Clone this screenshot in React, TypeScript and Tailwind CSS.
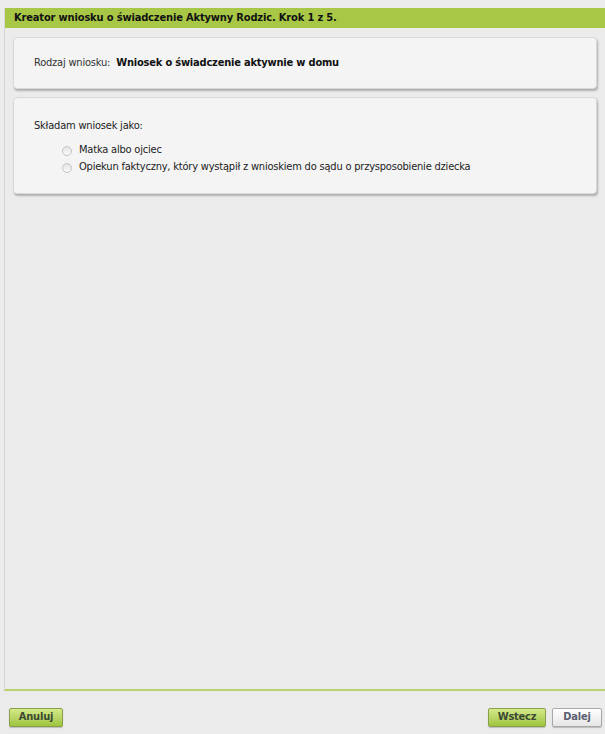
import React from "react";

function Radio() {
  return (
    <span className="inline-block w-[10px] h-[10px] rounded-full border border-[#c4c4c4] bg-gradient-to-b from-[#e4e4e4] to-[#fafafa] shrink-0" />
  );
}

export default function App() {
  return (
    <div
      className="w-[605px] h-[734px] bg-[#ebebeb] overflow-hidden text-[#222] tracking-[-0.2px]"
      style={{ fontFamily: '"DejaVu Sans Condensed", "DejaVu Sans", sans-serif', fontStretch: "condensed" }}
    >
      <div className="pt-[8px] pl-[4px]">
        <div className="h-[683px] border-l border-[#d6d6d6] border-b-2 border-b-[#b9d26e] flex flex-col">
          <div className="h-[20px] bg-[#a8c746] flex items-center pl-[9px] text-[11px] font-bold text-[#111] tracking-[-0.15px]">
            Kreator wniosku o świadczenie Aktywny Rodzic. Krok 1 z 5.
          </div>
          <div className="pl-[8px] pr-[8px] pt-[9px] flex flex-col gap-[8px]">
            <div className="h-[52px] rounded-[4px] border border-[#d8d8d8] bg-[#f4f4f4] shadow-[1px_2px_2px_rgba(0,0,0,0.25)] flex items-center pl-[20px] text-[11px]">
              <span className="text-[#333]">Rodzaj wniosku:</span>
              <span className="ml-[6px] font-bold text-[#111]">Wniosek o świadczenie aktywnie w domu</span>
            </div>
            <div className="h-[97px] rounded-[4px] border border-[#d8d8d8] bg-[#f4f4f4] shadow-[1px_2px_2px_rgba(0,0,0,0.25)] pl-[20px] pt-[20px] text-[11px] text-[#222]">
              <div className="leading-[15px]">Składam wniosek jako:</div>
              <div className="mt-[9px] pl-[28px] flex flex-col">
                <label className="flex items-center gap-[7px] h-[17px]">
                  <Radio />
                  <span>Matka albo ojciec</span>
                </label>
                <label className="flex items-center gap-[7px] h-[17px]">
                  <Radio />
                  <span>Opiekun faktyczny, który wystąpił z wnioskiem do sądu o przysposobienie dziecka</span>
                </label>
              </div>
            </div>
          </div>
        </div>
      </div>
      <div className="flex items-center justify-between pl-[9px] pr-[3px] pt-[17px]">
        <button className="h-[19px] w-[54px] rounded-[2px] border border-[#8aa04a] bg-gradient-to-b from-[#d4ea8a] to-[#9fc43c] text-[11px] font-bold text-[#3b4a33] shadow-[0_1px_1px_rgba(0,0,0,0.2)]">
          Anuluj
        </button>
        <div className="flex gap-[6px]">
          <button className="h-[19px] w-[58px] rounded-[2px] border border-[#8aa04a] bg-gradient-to-b from-[#d4ea8a] to-[#9fc43c] text-[11px] font-bold text-[#3b4a33] shadow-[0_1px_1px_rgba(0,0,0,0.2)]">
            Wstecz
          </button>
          <button className="h-[19px] w-[50px] rounded-[2px] border border-[#a8a8a8] bg-gradient-to-b from-[#ffffff] to-[#e6e6e6] text-[11px] font-bold text-[#5a6070] shadow-[0_1px_1px_rgba(0,0,0,0.2)]">
            Dalej
          </button>
        </div>
      </div>
    </div>
  );
}
